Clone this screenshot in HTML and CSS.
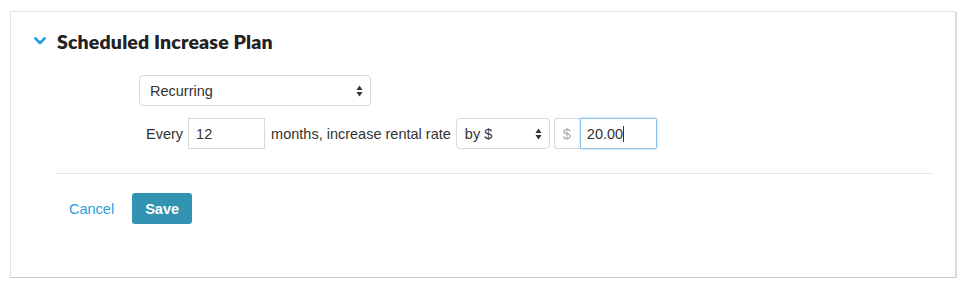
FILE: index.html
```html
<!DOCTYPE html>
<html>
<head>
<meta charset="utf-8">
<link rel="stylesheet" href="styles.css">
</head>
<body>
<div class="card">
  <div class="header">
    <svg class="chev" width="12" height="8" viewBox="0 0 12 8"><path d="M1.5 1.5 L6 6 L10.5 1.5" fill="none" stroke="#2aa0dc" stroke-width="2.8" stroke-linecap="round" stroke-linejoin="round"/></svg>
    <h2 class="title">Scheduled Increase Plan</h2>
  </div>
  <div class="body">
    <div class="select wide"><span>Recurring</span><svg class="arrows" width="7" height="12" viewBox="0 0 7 12"><path d="M3.5 0.5 L6.5 5 L0.5 5 Z M0.5 7 L6.5 7 L3.5 11.5 Z" fill="#333"/></svg></div>
    <div class="row">
      <span class="lbl">Every</span>
      <div class="input num">12</div>
      <span class="lbl">months, increase rental rate</span>
      <div class="select small"><span>by $</span><svg class="arrows" width="7" height="12" viewBox="0 0 7 12"><path d="M3.5 0.5 L6.5 5 L0.5 5 Z M0.5 7 L6.5 7 L3.5 11.5 Z" fill="#333"/></svg></div>
      <div class="group">
        <div class="addon">$</div>
        <div class="input focus">20.00<span class="caret"></span></div>
      </div>
    </div>
  </div>
  <div class="footer">
    <a class="cancel">Cancel</a>
    <button class="save">Save</button>
  </div>
</div>
</body>
</html>
```
FILE: styles.css
```css
* { box-sizing: border-box; }
body {
  margin: 0;
  background: #fff;
  font-family: "Liberation Sans", Arial, sans-serif;
  font-size: 14.5px;
  color: #333;
}
.card {
  margin: 11px 0 0 10px;
  width: 946px;
  height: 267px;
  border: 1px solid #e2e2e2;
  border-bottom-color: #c8c8c8;
  border-right-color: #d6d6d6;
  box-shadow: 1px 1px 1px rgba(0,0,0,0.12);
  background: #fff;
  padding: 0 21px 0 45px;
}
.header {
  display: flex;
  align-items: center;
  height: 60px;
  padding-bottom: 2px;
  margin-left: -22px;
}
.chev { margin-right: 11px; margin-top: 0; }
.title {
  margin: 0;
  font-family: "Lato", sans-serif;
  font-weight: 800;
  font-size: 19.5px;
  color: #222;
  letter-spacing: 0.15px;
}
.body {
  padding: 3px 0 0 83px;
}
.select {
  display: flex;
  align-items: center;
  justify-content: space-between;
  height: 31px;
  border: 1px solid #d9d9d9;
  border-radius: 4px;
  background: #fff;
  padding: 0 7px 0 10px;
  color: #333;
}
.select.wide { width: 232px; }
.select.small { width: 94px; height: 31px; padding-left: 8px; }
.arrows { display: block; }
.row {
  display: flex;
  align-items: center;
  margin-top: 12px;
  padding-left: 7px;
}
.lbl { margin-right: 5px; }
.input {
  height: 31px;
  border: 1px solid #d9d9d9;
  display: flex;
  align-items: center;
  padding: 0 6px 0 6px;
  background: #fff;
}
.input.num { width: 77px; margin-right: 6px; padding-left: 7px; }
.group { display: flex; margin-left: 4px; }
.addon {
  height: 31px;
  width: 26px;
  border: 1px solid #d9d9d9;
  border-right: none;
  border-radius: 3px 0 0 3px;
  color: #aaa;
  display: flex;
  align-items: center;
  padding-left: 8px;
}
.input.focus {
  width: 77px;
  border-color: #8cc1ea;
  box-shadow: 0 0 3px rgba(102,170,230,0.55);
  border-radius: 0 2px 2px 0;
  padding-left: 6px;
}
.caret {
  display: inline-block;
  width: 1px;
  height: 16px;
  background: #333;
  margin-left: 0;
}
.footer {
  margin-top: 24px;
  border-top: 1px solid #e8e8e8;
  display: flex;
  align-items: center;
  padding: 19px 0 0 13px;
}
.cancel {
  color: #2aa0dc;
  font-size: 14.5px;
  margin-right: 18px;
}
.save {
  background: #3393b3;
  color: #fff;
  border: none;
  border-radius: 3px;
  font-family: "Liberation Sans", Arial, sans-serif;
  font-weight: bold;
  font-size: 14.5px;
  width: 60px;
  height: 31px;
  padding: 0;
}
```
